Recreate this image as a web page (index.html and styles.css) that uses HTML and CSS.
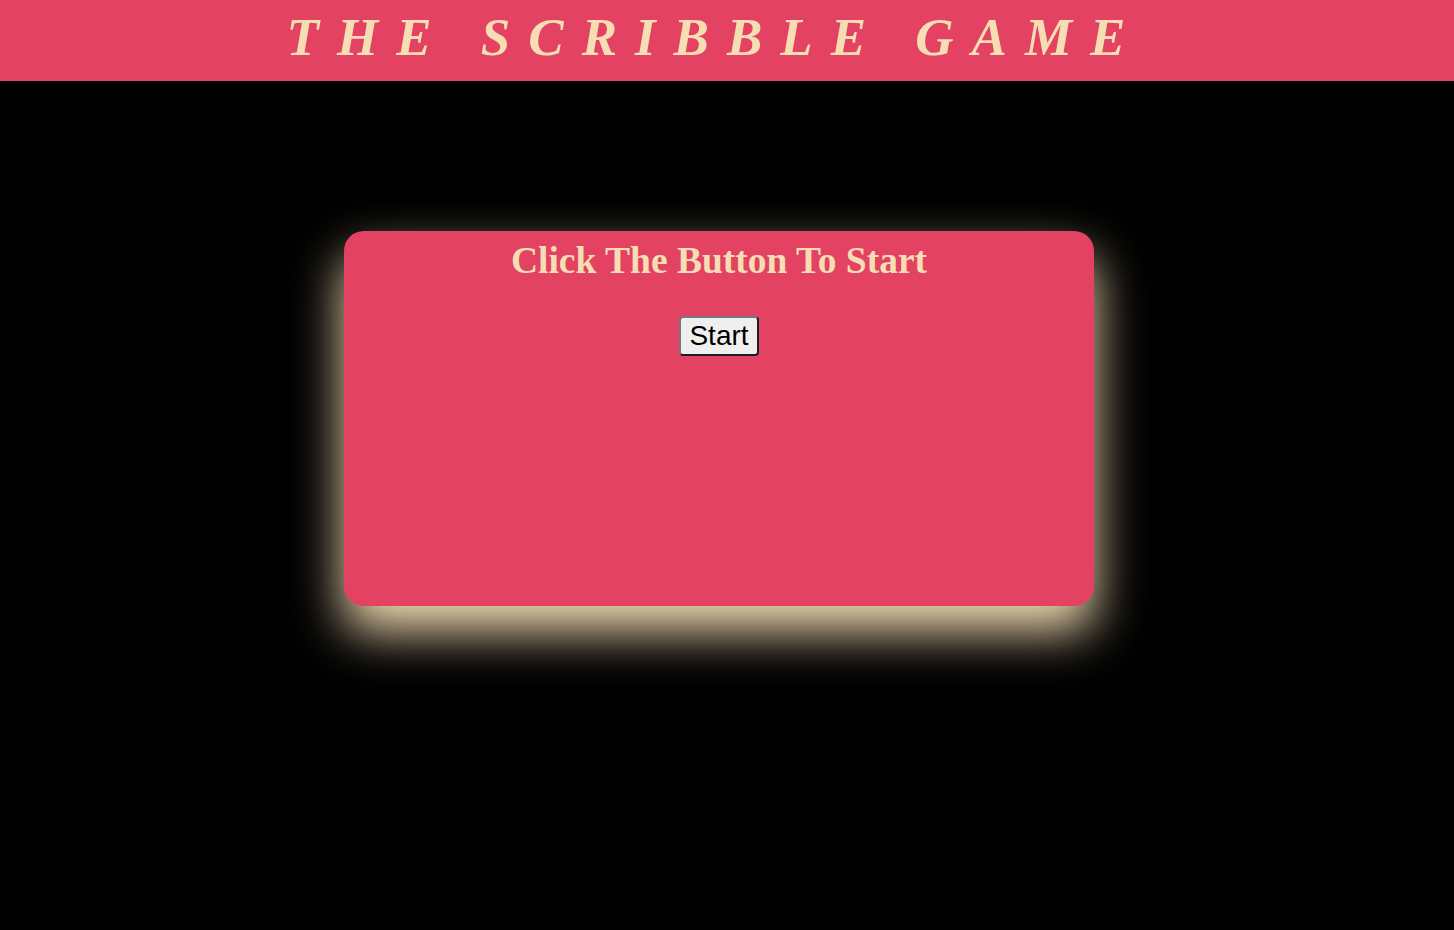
FILE: index.html
```html
<!DOCTYPE html>
<html lang="en">
<head>
<meta charset="utf-8">
<title>The Scribble Game</title>
<link rel="stylesheet" href="styles.css">
</head>
<body>
<header class="top-bar">
  <h1 class="title">THE SCRIBBLE GAME</h1>
</header>
<main class="stage">
  <section class="card">
    <h2 class="prompt">Click The Button To Start</h2>
    <button class="start-btn" type="button">Start</button>
  </section>
</main>
</body>
</html>
```
FILE: styles.css
```css
html, body {
  margin: 0;
  padding: 0;
  background: #000;
}

body {
  font-family: "Liberation Serif", "Times New Roman", serif;
  min-height: 930px;
}

.top-bar {
  background: #e34262;
  height: 81px;
  box-sizing: border-box;
  padding-top: 7px;
  text-align: center;
}

.title {
  margin: 0;
  font-size: 53px;
  line-height: 60px;
  font-weight: bold;
  font-style: italic;
  color: #f5deb3;
  letter-spacing: 18px;
  padding-right: 24px;
}

.stage {
  padding: 150px 16px 0 0;
  display: flex;
  justify-content: center;
}

.card {
  width: 750px;
  height: 375px;
  box-sizing: border-box;
  background: #e34262;
  border-radius: 20px;
  box-shadow: 0 25px 50px #f5deb3;
  display: flex;
  flex-direction: column;
  align-items: center;
  padding-top: 5px;
}

.prompt {
  margin: 0;
  font-size: 37.5px;
  line-height: 50px;
  font-weight: bold;
  color: #f5deb3;
}

.start-btn {
  margin-top: 30px;
  font-family: "Liberation Sans", Arial, sans-serif;
  font-size: 28px;
  line-height: 34px;
  padding: 1px 8px;
  color: #000;
  background: #efefef;
  border: 2px solid;
  border-color: #767676 #1e1e1e #1e1e1e #767676;
  border-radius: 4px;
}
```
